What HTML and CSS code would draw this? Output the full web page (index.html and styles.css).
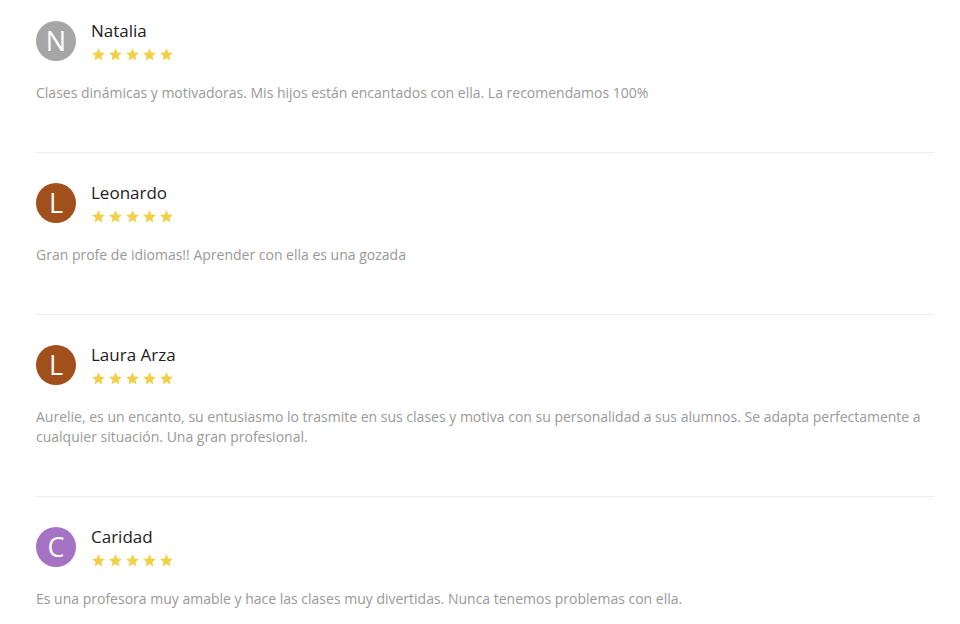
FILE: index.html
```html
<!DOCTYPE html>
<html lang="es">
<head>
<meta charset="utf-8">
<title>Opiniones</title>
<link rel="stylesheet" href="styles.css">
</head>
<body>
<div class="reviews">
  <div class="review">
    <div class="head">
      <div class="avatar grey">N</div>
      <div class="meta">
        <div class="name">Natalia</div>
        <div class="stars">
          <svg viewBox="1 1 22 22"><path d="M12 1.5l3.1 7.1 7.7.7-5.8 5.1 1.7 7.6L12 18l-6.7 4 1.7-7.6-5.8-5.1 7.7-.7z"/></svg>
          <svg viewBox="1 1 22 22"><path d="M12 1.5l3.1 7.1 7.7.7-5.8 5.1 1.7 7.6L12 18l-6.7 4 1.7-7.6-5.8-5.1 7.7-.7z"/></svg>
          <svg viewBox="1 1 22 22"><path d="M12 1.5l3.1 7.1 7.7.7-5.8 5.1 1.7 7.6L12 18l-6.7 4 1.7-7.6-5.8-5.1 7.7-.7z"/></svg>
          <svg viewBox="1 1 22 22"><path d="M12 1.5l3.1 7.1 7.7.7-5.8 5.1 1.7 7.6L12 18l-6.7 4 1.7-7.6-5.8-5.1 7.7-.7z"/></svg>
          <svg viewBox="1 1 22 22"><path d="M12 1.5l3.1 7.1 7.7.7-5.8 5.1 1.7 7.6L12 18l-6.7 4 1.7-7.6-5.8-5.1 7.7-.7z"/></svg>
        </div>
      </div>
    </div>
    <p class="text">Clases dinámicas y motivadoras. Mis hijos están encantados con ella. La recomendamos 100%</p>
  </div>
  <div class="review">
    <div class="head">
      <div class="avatar brown">L</div>
      <div class="meta">
        <div class="name">Leonardo</div>
        <div class="stars">
          <svg viewBox="1 1 22 22"><path d="M12 1.5l3.1 7.1 7.7.7-5.8 5.1 1.7 7.6L12 18l-6.7 4 1.7-7.6-5.8-5.1 7.7-.7z"/></svg>
          <svg viewBox="1 1 22 22"><path d="M12 1.5l3.1 7.1 7.7.7-5.8 5.1 1.7 7.6L12 18l-6.7 4 1.7-7.6-5.8-5.1 7.7-.7z"/></svg>
          <svg viewBox="1 1 22 22"><path d="M12 1.5l3.1 7.1 7.7.7-5.8 5.1 1.7 7.6L12 18l-6.7 4 1.7-7.6-5.8-5.1 7.7-.7z"/></svg>
          <svg viewBox="1 1 22 22"><path d="M12 1.5l3.1 7.1 7.7.7-5.8 5.1 1.7 7.6L12 18l-6.7 4 1.7-7.6-5.8-5.1 7.7-.7z"/></svg>
          <svg viewBox="1 1 22 22"><path d="M12 1.5l3.1 7.1 7.7.7-5.8 5.1 1.7 7.6L12 18l-6.7 4 1.7-7.6-5.8-5.1 7.7-.7z"/></svg>
        </div>
      </div>
    </div>
    <p class="text">Gran profe de idiomas!! Aprender con ella es una gozada</p>
  </div>
  <div class="review">
    <div class="head">
      <div class="avatar brown">L</div>
      <div class="meta">
        <div class="name">Laura Arza</div>
        <div class="stars">
          <svg viewBox="1 1 22 22"><path d="M12 1.5l3.1 7.1 7.7.7-5.8 5.1 1.7 7.6L12 18l-6.7 4 1.7-7.6-5.8-5.1 7.7-.7z"/></svg>
          <svg viewBox="1 1 22 22"><path d="M12 1.5l3.1 7.1 7.7.7-5.8 5.1 1.7 7.6L12 18l-6.7 4 1.7-7.6-5.8-5.1 7.7-.7z"/></svg>
          <svg viewBox="1 1 22 22"><path d="M12 1.5l3.1 7.1 7.7.7-5.8 5.1 1.7 7.6L12 18l-6.7 4 1.7-7.6-5.8-5.1 7.7-.7z"/></svg>
          <svg viewBox="1 1 22 22"><path d="M12 1.5l3.1 7.1 7.7.7-5.8 5.1 1.7 7.6L12 18l-6.7 4 1.7-7.6-5.8-5.1 7.7-.7z"/></svg>
          <svg viewBox="1 1 22 22"><path d="M12 1.5l3.1 7.1 7.7.7-5.8 5.1 1.7 7.6L12 18l-6.7 4 1.7-7.6-5.8-5.1 7.7-.7z"/></svg>
        </div>
      </div>
    </div>
    <p class="text">Aurelie, es un encanto, su entusiasmo lo trasmite en sus clases y motiva con su personalidad a sus alumnos. Se adapta perfectamente a cualquier situación. Una gran profesional.</p>
  </div>
  <div class="review">
    <div class="head">
      <div class="avatar purple">C</div>
      <div class="meta">
        <div class="name">Caridad</div>
        <div class="stars">
          <svg viewBox="1 1 22 22"><path d="M12 1.5l3.1 7.1 7.7.7-5.8 5.1 1.7 7.6L12 18l-6.7 4 1.7-7.6-5.8-5.1 7.7-.7z"/></svg>
          <svg viewBox="1 1 22 22"><path d="M12 1.5l3.1 7.1 7.7.7-5.8 5.1 1.7 7.6L12 18l-6.7 4 1.7-7.6-5.8-5.1 7.7-.7z"/></svg>
          <svg viewBox="1 1 22 22"><path d="M12 1.5l3.1 7.1 7.7.7-5.8 5.1 1.7 7.6L12 18l-6.7 4 1.7-7.6-5.8-5.1 7.7-.7z"/></svg>
          <svg viewBox="1 1 22 22"><path d="M12 1.5l3.1 7.1 7.7.7-5.8 5.1 1.7 7.6L12 18l-6.7 4 1.7-7.6-5.8-5.1 7.7-.7z"/></svg>
          <svg viewBox="1 1 22 22"><path d="M12 1.5l3.1 7.1 7.7.7-5.8 5.1 1.7 7.6L12 18l-6.7 4 1.7-7.6-5.8-5.1 7.7-.7z"/></svg>
        </div>
      </div>
    </div>
    <p class="text">Es una profesora muy amable y hace las clases muy divertidas. Nunca tenemos problemas con ella.</p>
  </div>
</div>
</body>
</html>
```
FILE: styles.css
```css
html, body {
  margin: 0;
  padding: 0;
  background: #ffffff;
}
body {
  font-family: "Open Sans", "Liberation Sans", sans-serif;
}
.reviews {
  width: 898px;
  padding: 21px 0 0 36px;
}
.review {
  padding: 30px 0 49.4px;
  border-bottom: 1px solid #eeeeee;
}
.review:first-child {
  padding-top: 0;
}
.head {
  display: flex;
  align-items: flex-start;
  gap: 15px;
}
.avatar {
  width: 40px;
  height: 40px;
  border-radius: 50%;
  color: #ffffff;
  font-size: 27px;
  line-height: 40px;
  text-align: center;
  font-weight: 400;
  flex: none;
}
.grey { background: #a6a6a6; }
.brown { background: #a14f1b; }
.purple { background: #a572c4; }
.meta {
  display: flex;
  flex-direction: column;
  margin-top: -2px;
}
.name {
  font-size: 17px;
  line-height: 23px;
  color: #222222;
}
.stars {
  display: flex;
  gap: 4px;
  margin-top: 6px;
  margin-left: 1px;
}
.stars svg {
  width: 13px;
  height: 13px;
  fill: #f2cf48;
}
.text {
  margin: 22px 0 0;
  font-size: 14px;
  line-height: 19.6px;
  color: #999999;
}
```
